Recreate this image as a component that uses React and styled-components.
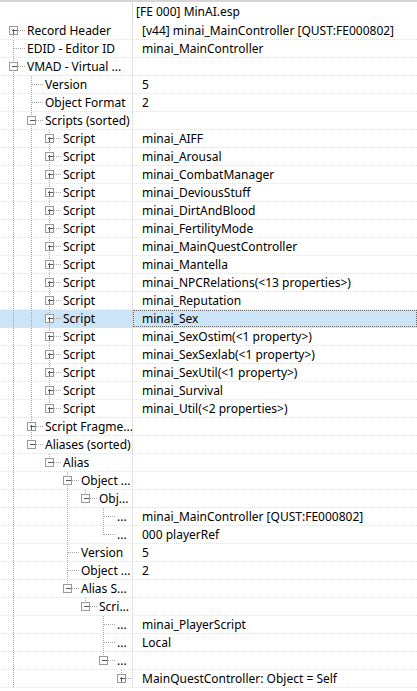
import React from "react";
import styled, { createGlobalStyle } from "styled-components";

const GlobalStyle = createGlobalStyle`
  html, body {
    margin: 0;
    padding: 0;
    background: #ffffff;
  }
  body {
    font-family: "Noto Sans", "Segoe UI", sans-serif;
    font-size: 12px;
    color: #000000;
  }
`;

const NAME_W = 133;
const ROW_H = 18;

// level, name, value, exp ("+" | "-" | null), last sibling, selected
const rows = [
  [0, "Record Header", "[v44] minai_MainController [QUST:FE000802]", "+", false],
  [0, "EDID - Editor ID", "minai_MainController", null, false],
  [0, "VMAD - Virtual ...", "", "-", false],
  [1, "Version", "5", null, false],
  [1, "Object Format", "2", null, false],
  [1, "Scripts (sorted)", "", "-", false],
  [2, "Script", "minai_AIFF", "+", false],
  [2, "Script", "minai_Arousal", "+", false],
  [2, "Script", "minai_CombatManager", "+", false],
  [2, "Script", "minai_DeviousStuff", "+", false],
  [2, "Script", "minai_DirtAndBlood", "+", false],
  [2, "Script", "minai_FertilityMode", "+", false],
  [2, "Script", "minai_MainQuestController", "+", false],
  [2, "Script", "minai_Mantella", "+", false],
  [2, "Script", "minai_NPCRelations(<13 properties>)", "+", false],
  [2, "Script", "minai_Reputation", "+", false],
  [2, "Script", "minai_Sex", "+", false, true],
  [2, "Script", "minai_SexOstim(<1 property>)", "+", false],
  [2, "Script", "minai_SexSexlab(<1 property>)", "+", false],
  [2, "Script", "minai_SexUtil(<1 property>)", "+", false],
  [2, "Script", "minai_Survival", "+", false],
  [2, "Script", "minai_Util(<2 properties>)", "+", true],
  [1, "Script Fragme...", "", "+", false],
  [1, "Aliases (sorted)", "", "-", true],
  [2, "Alias", "", "-", true],
  [3, "Object ...", "", "-", false],
  [4, "Obj...", "", "-", true],
  [5, "...", "minai_MainController [QUST:FE000802]", null, false],
  [5, "...", "000 playerRef", null, true],
  [3, "Version", "5", null, false],
  [3, "Object ...", "2", null, false],
  [3, "Alias S...", "", "-", true],
  [4, "Scri...", "", "-", true],
  [5, "...", "minai_PlayerScript", null, false],
  [5, "...", "Local", null, false],
  [5, "...", "", "-", true],
  [6, "", "MainQuestController: Object = Self", "+", true],
];

const Tree = styled.div`
  width: 100%;
  border-top: 2px solid #d6d6d6;
`;

const HeaderRow = styled.div`
  display: grid;
  grid-template-columns: ${NAME_W}px 1fr;
  height: 20px;
`;

const HeaderCell = styled.div`
  border-right: ${(p) => (p.$first ? "1px solid #d9d9d9" : "none")};
  padding-left: 3px;
  line-height: 20px;
  white-space: nowrap;
  overflow: hidden;
`;

const Row = styled.div`
  display: grid;
  grid-template-columns: ${NAME_W}px 1fr;
  height: ${ROW_H}px;
  box-sizing: border-box;
  border-bottom: 1px dotted #e2e2e2;
  background: ${(p) => (p.$selected ? "#cce4f7" : "transparent")};
`;

const NameCell = styled.div`
  display: flex;
  align-items: center;
  overflow: hidden;
  white-space: nowrap;
  border-right: 1px dotted #cfcfcf;
`;

const ValueCell = styled.div`
  box-sizing: border-box;
  padding-left: ${(p) => (p.$focused ? 8 : 9)}px;
  line-height: ${(p) => (p.$focused ? 15 : 17)}px;
  white-space: nowrap;
  overflow: hidden;
  border: ${(p) => (p.$focused ? "1px dotted #6a6a6a" : "none")};
`;

const Label = styled.span`
  line-height: 17px;
`;

function Guides({ level, guides, exp, last, first }) {
  const w = 27 + level * 18;
  const h = ROW_H - 1;
  const cy = 8.5;
  const x0 = 13 + level * 18 + 0.5;
  const line = { stroke: "#a8a8a8", strokeWidth: 1, strokeDasharray: "1 1" };
  return (
    <svg width={w} height={h} style={{ flex: "none" }} shapeRendering="crispEdges">
      {guides.map((g, a) =>
        g ? <line key={a} x1={13 + a * 18 + 0.5} y1={0} x2={13 + a * 18 + 0.5} y2={h} {...line} /> : null
      )}
      <line x1={x0} y1={first ? cy : 0} x2={x0} y2={last ? cy : h} {...line} />
      <line x1={x0} y1={cy} x2={x0 + 11} y2={cy} {...line} />
      {exp && (
        <g>
          <rect x={x0 - 4} y={cy - 4} width={8} height={8} fill="#fbfbfb" stroke="#9a9a9a" />
          <line x1={x0 - 2} y1={cy} x2={x0 + 3} y2={cy} stroke="#5a5a5a" />
          {exp === "+" && <line x1={x0} y1={cy - 2} x2={x0} y2={cy + 3} stroke="#5a5a5a" />}
        </g>
      )}
    </svg>
  );
}

export default function App() {
  const lastAt = [];
  return (
    <>
      <GlobalStyle />
      <Tree>
        <HeaderRow>
          <HeaderCell $first />
          <HeaderCell>[FE 000] MinAI.esp</HeaderCell>
        </HeaderRow>
        {rows.map(([level, name, value, exp, last, selected], i) => {
          const guides = [];
          for (let a = 0; a < level; a++) guides.push(!lastAt[a]);
          lastAt[level] = last;
          return (
            <Row key={i} $selected={selected}>
              <NameCell>
                <Guides level={level} guides={guides} exp={exp} last={last} first={i === 0} />
                <Label>{name}</Label>
              </NameCell>
              <ValueCell $focused={selected}>{value}</ValueCell>
            </Row>
          );
        })}
      </Tree>
    </>
  );
}
